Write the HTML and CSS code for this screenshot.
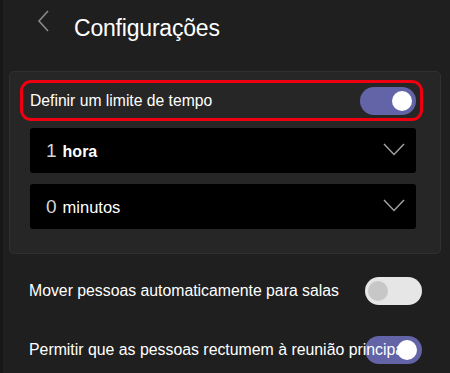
FILE: index.html
```html
<!DOCTYPE html>
<html lang="pt">
<head>
<meta charset="utf-8">
<link rel="stylesheet" href="styles.css">
</head>
<body>
<div class="app">
  <header class="header">
    <svg class="back" width="14" height="24" viewBox="0 0 14 24"><path d="M11 2 L2 12 L11 22" fill="none" stroke="#8a8a8a" stroke-width="1.6"/></svg>
    <h1 class="title">Configurações</h1>
  </header>

  <section class="panel">
    <div class="limit-row">
      <span class="label">Definir um limite de tempo</span>
      <span class="toggle on"><span class="knob"></span></span>
    </div>
    <div class="select">
      <span class="num">1</span><span class="unit bold">hora</span>
      <svg class="chev" width="22" height="13" viewBox="0 0 22 13"><path d="M1 1 L11 11.5 L21 1" fill="none" stroke="#a0a0a0" stroke-width="1.5"/></svg>
    </div>
    <div class="select second">
      <span class="num">0</span><span class="unit">minutos</span>
      <svg class="chev" width="22" height="13" viewBox="0 0 22 13"><path d="M1 1 L11 11.5 L21 1" fill="none" stroke="#a0a0a0" stroke-width="1.5"/></svg>
    </div>
  </section>

  <div class="setting first">
    <span class="label">Mover pessoas automaticamente para salas</span>
    <span class="toggle off"><span class="knob"></span></span>
  </div>
  <div class="setting last">
    <span class="label over">Permitir que as pessoas rectumem à reunião principal</span>
    <span class="toggle on wide"><span class="knob"></span></span>
  </div>
</div>
</body>
</html>
```

FILE: styles.css
```css
* { box-sizing: border-box; }
html, body { margin: 0; padding: 0; }
body {
  background: #1f1f1f;
  font-family: "Liberation Sans", Arial, sans-serif;
  color: #ffffff;
  width: 450px;
  height: 373px;
  overflow: hidden;
}
.app {
  height: 373px;
  border-left: 3px solid #171717;
  overflow: hidden;
}
.header {
  display: flex;
  align-items: center;
  height: 42px;
  padding-left: 34px;
  padding-top: 2px;
}
.back { display: block; margin-right: 23px; margin-top: -2px; }
.title {
  margin: 0;
  font-size: 23px;
  font-weight: 400;
  line-height: 1;
  margin-top: 12px;
  letter-spacing: -0.2px;
}
.panel {
  margin: 29px 9px 0 6px;
  height: 183px;
  background: #262626;
  border: 1px solid #303030;
  border-radius: 5px;
  padding-top: 8px;
}
.limit-row {
  display: flex;
  align-items: center;
  justify-content: space-between;
  margin: 0 17px 0 10px;
  height: 41px;
  border: 3px solid #ee0010;
  border-radius: 11px;
  padding: 0 4px 0 7px;
}
.label {
  font-size: 15.7px;
  color: #ffffff;
  white-space: nowrap;
}
.toggle {
  display: flex;
  align-items: center;
  flex: none;
  width: 56px;
  height: 28px;
  border-radius: 14px;
  padding: 0 4px;
}
.toggle.on { background: #6264a7; justify-content: flex-end; }
.toggle.off { background: #e6e6e6; justify-content: flex-start; padding: 0 3px; }
.knob {
  display: block;
  width: 20px;
  height: 20px;
  border-radius: 50%;
  background: #ffffff;
  position: relative;
  z-index: 2;
}
.toggle.off .knob { background: #c7c7c7; }
.select {
  display: flex;
  align-items: center;
  margin: 7px 24px 0 20px;
  height: 45px;
  background: #000000;
  border-radius: 3px;
  padding: 0 11px 0 16px;
}
.select.second { margin-top: 11px; }
.num {
  font-size: 19px;
  color: #d6d6d6;
  margin-right: 6px;
}
.unit {
  font-size: 16.5px;
  color: #ffffff;
  flex: 1;
  padding-top: 2px;
}
.unit.bold { font-weight: 700; font-size: 16px; }
.chev { display: block; margin-top: -2px; }
.setting {
  display: flex;
  align-items: center;
  justify-content: space-between;
  height: 29px;
  padding: 0 28px 0 26px;
}
.setting .toggle { width: 57px; }
.setting .toggle.wide { padding-right: 5px; }
.setting.first { margin-top: 22px; }
.setting.last { margin-top: 30px; }
.setting .label { font-size: 15.8px; }
.label.over {
  position: relative;
  z-index: 1;
  font-size: 15.85px;
  margin-right: -60px;
}
```
